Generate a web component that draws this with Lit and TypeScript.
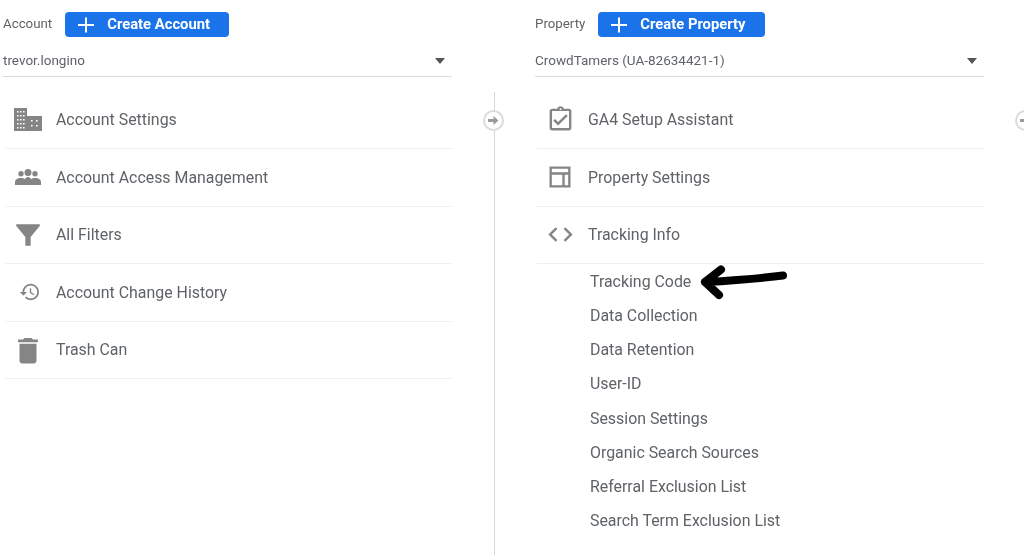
import { LitElement, html, css, svg } from "lit";
import { customElement } from "lit/decorators.js";

function windows(xs: number[], ys: number[]) {
  return xs.flatMap((x) => ys.map((y) => `M${x} ${y}h1.6v1.6h-1.6z`)).join("");
}

const P = {
  domain: "M0 0h13v8h15v15H0z" + windows([3, 6, 9], [3, 7, 11, 15, 19]) + windows([17, 22], [12, 17]),
  groups: "M1 17v-3c0-2 2-4 6-4 2 0 3 .5 4 1 1-1.500 2-2 3-2s2 .5 3 2c1-.5 2-1 4-1 4 0 6 2 6 4v3zM7 8.500a2.700 2.700 0 1 0 0-5.400 2.700 2.700 0 0 0 0 5.400zM14 8a3.500 3.500 0 1 0 0-7 3.500 3.500 0 0 0 0 7zM21 8.500a2.700 2.700 0 1 0 0-5.400 2.700 2.700 0 0 0 0 5.400z",
  filter: "M3.600 4h16.800c.5 0 .8.6.5 1L14 13.500V20h-4v-6.500L3.100 5c-.3-.4 0-1 .5-1z",
  history: "M13 3c-4.970 0-9 4.030-9 9H1l3.890 3.890.07.140L9 12H6c0-3.870 3.130-7 7-7s7 3.130 7 7-3.130 7-7 7c-1.930 0-3.680-.790-4.940-2.060l-1.420 1.420C8.270 19.990 10.510 21 13 21c4.970 0 9-4.030 9-9s-4.030-9-9-9zm-1 5v5l4.280 2.540.720-1.210-3.500-2.080V8H12z",
  trash: "M6 19c0 1.100.9 2 2 2h8c1.100 0 2-.9 2-2V7H6v12zM19 4h-3.500l-1-1h-5l-1 1H5v2h14V4z",
  assign: "M18 9l-1.410-1.420L10 14.170l-2.590-2.580L6 13l4 4zm1-6h-4.180C14.400 1.840 13.300 1 12 1s-2.400.84-2.820 2H5c-1.100 0-2 .9-2 2v14c0 1.100.9 2 2 2h14c1.100 0 2-.9 2-2V5c0-1.100-.9-2-2-2zm-7-.250c.41 0 .75.340.75.750s-.340.750-.750.750-.750-.340-.750-.750.340-.750.750-.750zM19 19H5V5h14v14z",
  layout: "M3 3v18h18V3H3zm2 2h14v3H5V5zm0 5h9v9H5v-9zm11 0h3v9h-3v-9z",
  code: "M9.400 16.600L4.800 12l4.600-4.600L8 6l-6 6 6 6 1.400-1.400zm5.200 0l4.600-4.600-4.600-4.600L16 6l6 6-6 6-1.400-1.400z",
};

type Item = { label: string; d: string; w: number; h: number; box: string };

const leftRows: Item[] = [
  { label: "Account Settings", d: P.domain, w: 28, h: 23, box: "0 0 28 23" },
  { label: "Account Access Management", d: P.groups, w: 28, h: 18, box: "0 0 28 18" },
  { label: "All Filters", d: P.filter, w: 32, h: 32, box: "0 0 24 24" },
  { label: "Account Change History", d: P.history, w: 22, h: 22, box: "-2 0 24 24" },
  { label: "Trash Can", d: P.trash, w: 34, h: 34, box: "0 -.5 24 24" },
];
const rightRows: Item[] = [
  { label: "GA4 Setup Assistant", d: P.assign, w: 29, h: 29, box: "0 0 24 24" },
  { label: "Property Settings", d: P.layout, w: 28, h: 28, box: "0 0 24 24" },
  { label: "Tracking Info", d: P.code, w: 29, h: 29, box: "0 0 24 24" },
];
const subs = [
  "Tracking Code", "Data Collection", "Data Retention", "User-ID", "Session Settings",
  "Organic Search Sources", "Referral Exclusion List", "Search Term Exclusion List",
];

@customElement("app-root")
export class AppRoot extends LitElement {
  static styles = css`
    :host {
      display: block;
      width: 1024px;
      height: 555px;
      overflow: hidden;
      background: #fff;
      font-family: Roboto, "Liberation Sans", sans-serif;
      color: #5f6368;
      position: relative;
    }
    .stage { filter: blur(0.35px); }
    .page { display: flex; padding-left: 3px; height: 555px; }
    .col { width: 449px; flex: none; padding-top: 12px; box-sizing: border-box; }
    .head { display: flex; align-items: center; gap: 13px; height: 25px; font-size: 13.3px; }
    .head > span { margin-bottom: 2px; }
    .btn {
      display: flex; align-items: center; height: 25px; box-sizing: border-box;
      padding: 0 19px 0 13px; gap: 13px; background: #1a73e8; border-radius: 4px;
      color: #fff; font-size: 14.8px; font-weight: 700;
    }
    .btn span { margin-bottom: 1px; }
    .btn svg { display: block; }
    .select {
      display: flex; align-items: center; justify-content: space-between;
      height: 40px; box-sizing: border-box; padding: 6px 7px 0 0;
      border-bottom: 1px solid #dadce0; font-size: 13.5px; color: #5f6368;
    }
    .caret {
      width: 0; height: 0; margin-top: 3px;
      border-left: 5px solid transparent; border-right: 5px solid transparent;
      border-top: 6px solid #555;
    }
    .rows { margin-top: 14.5px; }
    .row {
      display: flex; align-items: center; height: 57.5px; box-sizing: border-box;
      margin-left: 2px;
      border-bottom: 1px solid #f0f0f0; font-size: 15.9px; padding-bottom: 0;
    }
    .icon { width: 44px; margin-left: 1px; margin-right: 6px; flex: none; display: flex; justify-content: center; }
    .icon svg { display: block; fill: #858585; fill-rule: evenodd; }
    .sub {
      height: 34.25px; display: flex; align-items: center; padding-left: 55px; font-size: 15.9px;
    }
    .conn { width: 83px; flex: none; display: flex; flex-direction: column; align-items: center; padding-top: 92px; box-sizing: border-box; position: relative; }
    .line { width: 1px; flex: 1; background: #d6d6d6; margin-left: 1px; }
    .circle {
      position: absolute; top: 109.500px; left: 50%; margin-left: -10.500px;
      width: 21px; height: 21px; box-sizing: border-box; border: 2px solid #dadce0;
      border-radius: 50%; background: #fff; display: flex; align-items: center; justify-content: center;
    }
    .circle svg { fill: #9a9a9a; display: block; }
    .arrow { position: absolute; left: 695px; top: 260px; fill: none; stroke: #000; stroke-width: 8; stroke-linecap: round; stroke-linejoin: round; }
  `;

  private btn(label: string) {
    return html`<div class="btn">
      <svg width="16" height="16" viewBox="0 0 16 16"><path d="M8 .5v15M0 8h16" stroke="#fff" stroke-width="2" fill="none"/></svg>
      <span>${label}</span>
    </div>`;
  }

  private rowsOf(items: Item[]) {
    return items.map(
      (r) => html`<div class="row">
        <div class="icon">
          <svg width=${r.w} height=${r.h} viewBox=${r.box}>${svg`<path d=${r.d}></path>`}</svg>
        </div>
        <span>${r.label}</span>
      </div>`
    );
  }

  private conn() {
    return html`<div class="conn">
      <div class="line"></div>
      <div class="circle">
        <svg width="13" height="13" viewBox="0 0 13 13"><path d="M1 5h5.500V2l5 4.500-5 4.500V8H1z"></path></svg>
      </div>
    </div>`;
  }

  render() {
    return html`<div class="stage">
      <div class="page">
        <section class="col">
          <div class="head"><span>Account</span>${this.btn("Create Account")}</div>
          <div class="select"><span>trevor.longino</span><i class="caret"></i></div>
          <div class="rows">${this.rowsOf(leftRows)}</div>
        </section>
        ${this.conn()}
        <section class="col">
          <div class="head"><span>Property</span>${this.btn("Create Property")}</div>
          <div class="select"><span>CrowdTamers (UA-82634421-1)</span><i class="caret"></i></div>
          <div class="rows">${this.rowsOf(rightRows)}</div>
          ${subs.map((s) => html`<div class="sub">${s}</div>`)}
        </section>
        ${this.conn()}
      </div>
      <svg class="arrow" width="100" height="44" viewBox="0 0 100 44">
        <path d="M10 22C30 21 60 19 88 15.500M26 9.500L10 22 24 35"></path>
      </svg>
    </div>`;
  }
}
